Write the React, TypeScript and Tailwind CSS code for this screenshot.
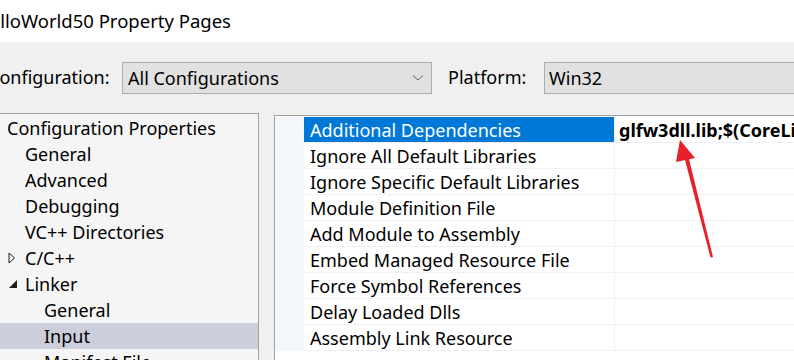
import React from 'react';

const tree = [
  { label: 'Configuration Properties', indent: 7 },
  { label: 'General', indent: 25 },
  { label: 'Advanced', indent: 25 },
  { label: 'Debugging', indent: 25 },
  { label: 'VC++ Directories', indent: 25 },
  { label: 'C/C++', indent: 25, icon: 'closed' },
  { label: 'Linker', indent: 25, icon: 'open' },
  { label: 'General', indent: 44 },
  { label: 'Input', indent: 44, selected: true },
  { label: 'Manifest File', indent: 44 },
];

const props = [
  'Additional Dependencies',
  'Ignore All Default Libraries',
  'Ignore Specific Default Libraries',
  'Module Definition File',
  'Add Module to Assembly',
  'Embed Managed Resource File',
  'Force Symbol References',
  'Delay Loaded Dlls',
  'Assembly Link Resource',
];

const Chevron = () => (
  <svg width="12" height="8" viewBox="0 0 12 8" className="text-[#606060]">
    <path d="M1 1.5 L6 6 L11 1.5" fill="none" stroke="currentColor" strokeWidth="1" />
  </svg>
);

export default function App() {
  return (
    <div className="relative w-[794px] h-[360px] overflow-hidden bg-[#f0f0f0] text-black font-['Noto_Sans',sans-serif] text-[18px] leading-none whitespace-nowrap">
      <div className="h-[42px] bg-white flex items-center">
        <span className="ml-[-24px] text-[18.5px] text-black">HelloWorld50 Property Pages</span>
      </div>

      <div className="h-[71px] flex items-start pt-[20px]">
        <span className="ml-[-12px] mt-[6px] w-[134px] shrink-0">Configuration:</span>
        <div className="w-[310px] shrink-0 h-[32px] border border-[#adadad] bg-[#e1e1e1] flex items-center justify-between pl-[5px] pr-[7px]">
          <span>All Configurations</span>
          <Chevron />
        </div>
        <span className="ml-[16px] mt-[6px] w-[96px] shrink-0">Platform:</span>
        <div className="flex-1 h-[32px] border border-[#adadad] border-r-0 bg-[#e1e1e1] flex items-center pl-[4px]">
          <span>Win32</span>
        </div>
      </div>

      <div className="flex h-[247px]">
        <div className="w-[259px] shrink-0 h-full bg-[#f5f5f5] border-t border-r border-[#a0a0a0] pt-[1px] overflow-hidden">
          {tree.map((t, i) => (
            <div
              key={i}
              className={`relative h-[26px] flex items-center ${t.selected ? 'bg-[#cccedb]' : ''}`}
              style={{ paddingLeft: t.indent }}
            >
              {t.icon === 'closed' && (
                <svg width="8" height="12" viewBox="0 0 8 12" className="absolute left-[8px] top-[7px]">
                  <path d="M1 1 L6.5 6 L1 11 Z" fill="none" stroke="#1e1e1e" strokeWidth="1" />
                </svg>
              )}
              {t.icon === 'open' && (
                <svg width="10" height="10" viewBox="0 0 10 10" className="absolute left-[8px] top-[8px]">
                  <path d="M9 1 L9 9 L1 9 Z" fill="#1e1e1e" />
                </svg>
              )}
              <span>{t.label}</span>
            </div>
          ))}
        </div>

        <div className="ml-[15px] mt-[2px] flex-1 min-w-0 h-full bg-white border-t border-l border-[#a0a0a0] pt-[1px] flex">
          <div className="w-[29px] shrink-0 h-[234px] bg-[#f3f6fb]" />
          <div className="flex-1 min-w-0">
            {props.map((p, i) => (
              <div key={i} className="flex h-[26px] border-b border-[#eef0f5]">
                <div
                  className={`w-[310px] shrink-0 flex items-center pl-[6px] ${i === 0 ? 'bg-[#0078d7] text-white' : ''}`}
                >
                  {p}
                </div>
                <div className="flex-1 min-w-0 border-l border-[#eef0f5] flex items-center pl-[4px] overflow-hidden">
                  {i === 0 && <span className="font-bold">glfw3dll.lib;$(CoreLibraryDependencies)</span>}
                </div>
              </div>
            ))}
          </div>
        </div>
      </div>

      <svg className="absolute left-0 top-0 pointer-events-none" width="794" height="360">
        <path d="M713 257 L710.5 257.5 L684.5 158 L688.5 157 Z" fill="#e8202a" />
        <path d="M680 140 L695 158 L676 162 Z" fill="#e8202a" />
      </svg>
    </div>
  );
}
